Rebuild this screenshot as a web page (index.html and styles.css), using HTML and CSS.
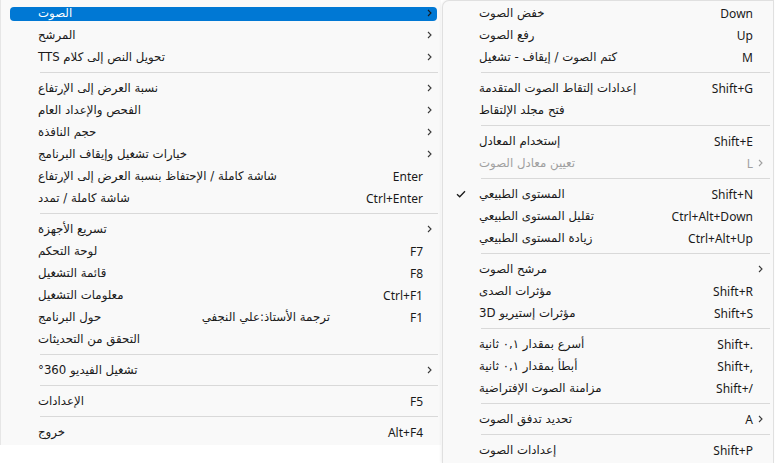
FILE: index.html
```html
<!DOCTYPE html>
<html>
<head>
<meta charset="utf-8">
<link rel="stylesheet" href="styles.css">
</head>
<body>
<div class="screen">

<!--main menu-->
<div class="menu main">
	<div class="item active"><span class="label" dir="rtl">الصوت</span><span class="key"></span><span class="arrow"><svg width="5" height="8" viewBox="0 0 5 8"><path d="M1 1 L4 4 L1 7"/></svg></span></div>
	<div class="item"><span class="label" dir="rtl">المرشح</span><span class="key"></span><span class="arrow"><svg width="5" height="8" viewBox="0 0 5 8"><path d="M1 1 L4 4 L1 7"/></svg></span></div>
	<div class="item"><span class="label" dir="rtl">تحويل النص إلى كلام TTS</span><span class="key"></span><span class="arrow"><svg width="5" height="8" viewBox="0 0 5 8"><path d="M1 1 L4 4 L1 7"/></svg></span></div>
	<div class="sep"></div>
	<div class="item"><span class="label" dir="rtl">نسبة العرض إلى الإرتفاع</span><span class="key"></span><span class="arrow"><svg width="5" height="8" viewBox="0 0 5 8"><path d="M1 1 L4 4 L1 7"/></svg></span></div>
	<div class="item"><span class="label" dir="rtl">الفحص والإعداد العام</span><span class="key"></span><span class="arrow"><svg width="5" height="8" viewBox="0 0 5 8"><path d="M1 1 L4 4 L1 7"/></svg></span></div>
	<div class="item"><span class="label" dir="rtl">حجم النافذة</span><span class="key"></span><span class="arrow"><svg width="5" height="8" viewBox="0 0 5 8"><path d="M1 1 L4 4 L1 7"/></svg></span></div>
	<div class="item"><span class="label" dir="rtl">خيارات تشغيل وإيقاف البرنامج</span><span class="key"></span><span class="arrow"><svg width="5" height="8" viewBox="0 0 5 8"><path d="M1 1 L4 4 L1 7"/></svg></span></div>
	<div class="item"><span class="label" dir="rtl">شاشة كاملة / الإحتفاظ بنسبة العرض إلى الإرتفاع</span><span class="key">Enter</span><span class="arrow"></span></div>
	<div class="item"><span class="label" dir="rtl">شاشة كاملة / تمدد</span><span class="key">Ctrl+Enter</span><span class="arrow"></span></div>
	<div class="sep"></div>
	<div class="item"><span class="label" dir="rtl">تسريع الأجهزة</span><span class="key"></span><span class="arrow"><svg width="5" height="8" viewBox="0 0 5 8"><path d="M1 1 L4 4 L1 7"/></svg></span></div>
	<div class="item"><span class="label" dir="rtl">لوحة التحكم</span><span class="key">F7</span><span class="arrow"></span></div>
	<div class="item"><span class="label" dir="rtl">قائمة التشغيل</span><span class="key">F8</span><span class="arrow"></span></div>
	<div class="item"><span class="label" dir="rtl">معلومات التشغيل</span><span class="key">Ctrl+F1</span><span class="arrow"></span></div>
	<div class="item"><span class="label" dir="rtl">حول البرنامج</span><span class="credit" dir="rtl">ترجمة الأستاذ:علي النجفي</span><span class="key fixed">F1</span><span class="arrow"></span></div>
	<div class="item"><span class="label" dir="rtl">التحقق من التحديثات</span><span class="key"></span><span class="arrow"></span></div>
	<div class="sep"></div>
	<div class="item"><span class="label" dir="rtl">تشغيل الفيديو 360°</span><span class="key"></span><span class="arrow"><svg width="5" height="8" viewBox="0 0 5 8"><path d="M1 1 L4 4 L1 7"/></svg></span></div>
	<div class="sep"></div>
	<div class="item"><span class="label" dir="rtl">الإعدادات</span><span class="key">F5</span><span class="arrow"></span></div>
	<div class="sep"></div>
	<div class="item"><span class="label" dir="rtl">خروج</span><span class="key">Alt+F4</span><span class="arrow"></span></div>
</div>

<!--sound submenu-->
<div class="menu sub">
	<div class="item"><span class="label" dir="rtl">خفض الصوت</span><span class="key">Down</span><span class="arrow"></span></div>
	<div class="item"><span class="label" dir="rtl">رفع الصوت</span><span class="key">Up</span><span class="arrow"></span></div>
	<div class="item"><span class="label" dir="rtl">كتم الصوت / إيقاف - تشغيل</span><span class="key">M</span><span class="arrow"></span></div>
	<div class="sep"></div>
	<div class="item"><span class="label" dir="rtl">إعدادات إلتقاط الصوت المتقدمة</span><span class="key">Shift+G</span><span class="arrow"></span></div>
	<div class="item"><span class="label" dir="rtl">فتح مجلد الإلتقاط</span><span class="key"></span><span class="arrow"></span></div>
	<div class="sep"></div>
	<div class="item"><span class="label" dir="rtl">إستخدام المعادل</span><span class="key">Shift+E</span><span class="arrow"></span></div>
	<div class="item disabled"><span class="label" dir="rtl">تعيين معادل الصوت</span><span class="key">L</span><span class="arrow"><svg width="5" height="8" viewBox="0 0 5 8"><path d="M1 1 L4 4 L1 7"/></svg></span></div>
	<div class="sep"></div>
	<div class="item"><span class="check"><svg width="10" height="8" viewBox="0 0 10 8"><path d="M1 4.2 L3.7 6.8 L9 1.2"/></svg></span><span class="label" dir="rtl">المستوى الطبيعي</span><span class="key">Shift+N</span><span class="arrow"></span></div>
	<div class="item"><span class="label" dir="rtl">تقليل المستوى الطبيعي</span><span class="key">Ctrl+Alt+Down</span><span class="arrow"></span></div>
	<div class="item"><span class="label" dir="rtl">زيادة المستوى الطبيعي</span><span class="key">Ctrl+Alt+Up</span><span class="arrow"></span></div>
	<div class="sep"></div>
	<div class="item"><span class="label" dir="rtl">مرشح الصوت</span><span class="key"></span><span class="arrow"><svg width="5" height="8" viewBox="0 0 5 8"><path d="M1 1 L4 4 L1 7"/></svg></span></div>
	<div class="item"><span class="label" dir="rtl">مؤثرات الصدى</span><span class="key">Shift+R</span><span class="arrow"></span></div>
	<div class="item"><span class="label" dir="rtl">مؤثرات إستيريو 3D</span><span class="key">Shift+S</span><span class="arrow"></span></div>
	<div class="sep"></div>
	<div class="item"><span class="label" dir="rtl">أسرع بمقدار ٠,١ ثانية</span><span class="key">Shift+.</span><span class="arrow"></span></div>
	<div class="item"><span class="label" dir="rtl">أبطأ بمقدار ٠,١ ثانية</span><span class="key">Shift+,</span><span class="arrow"></span></div>
	<div class="item"><span class="label" dir="rtl">مزامنة الصوت الإفتراضية</span><span class="key">Shift+/</span><span class="arrow"></span></div>
	<div class="sep"></div>
	<div class="item"><span class="label" dir="rtl">تحديد تدفق الصوت</span><span class="key">A</span><span class="arrow"><svg width="5" height="8" viewBox="0 0 5 8"><path d="M1 1 L4 4 L1 7"/></svg></span></div>
	<div class="sep"></div>
	<div class="item"><span class="label" dir="rtl">إعدادات الصوت</span><span class="key">Shift+P</span><span class="arrow"></span></div>
</div>

</div>
</body>
</html>
```

FILE: styles.css
```css
	body {
		margin: 0;
		background-color: #ffffff;
		overflow: hidden;
		font-family: "Noto Sans", "DejaVu Sans", sans-serif;
		font-size: 12px;
		color: #1a1a1a;
	}
	.screen {
		display: flex;
		align-items: flex-start;
	}

	.menu {
		background-color: #f9f9f9;
		padding: 2px 0;
		box-sizing: border-box;
	}
	.main {
		width: 441px;
		border-left: 1px solid #e6e6e6;
	}
	.sub {
		width: 332px;
		margin-left: 1px;
		padding-top: 1px;
		border: 1px solid #e0e0e0;
		border-bottom: none;
		border-top-left-radius: 7px;
		box-shadow: -1px 0 3px rgba(0, 0, 0, 0.06);
		flex-shrink: 0;
	}

	.item {
		position: relative;
		display: flex;
		align-items: center;
		height: 22px;
		padding-left: 37px;
		white-space: nowrap;
	}
	.sub .item {
		padding-left: 36px;
	}
	.label {
		font-family: "DejaVu Sans", sans-serif;
		font-size: 11.75px;
		unicode-bidi: isolate;
	}
	.credit {
		margin-left: auto;
		font-family: "DejaVu Sans", sans-serif;
		font-size: 11.75px;
		unicode-bidi: isolate;
	}
	.key {
		margin-left: auto;
	}
	.key.fixed {
		margin-left: 80px;
	}
	.arrow {
		width: 18px;
		display: flex;
		align-items: center;
		padding-left: 4px;
		box-sizing: border-box;
	}
	.sub .arrow {
		width: 20px;
		padding-left: 5px;
	}
	.arrow svg path {
		fill: none;
		stroke: #3a3a3a;
		stroke-width: 1.1;
	}

	.check {
		position: absolute;
		left: 13px;
		top: 7px;
		display: flex;
	}
	.check svg path {
		fill: none;
		stroke: #1a1a1a;
		stroke-width: 1.3;
	}

	.active {
		color: #ffffff;
	}
	.active::before {
		content: "";
		position: absolute;
		left: 9px;
		right: 4px;
		top: 5px;
		bottom: 3px;
		background-color: #0078d4;
		border-radius: 4px;
		z-index: 0;
	}
	.active span {
		position: relative;
	}
	.active .arrow svg path {
		stroke: #1a1a1a;
	}

	.disabled {
		color: #a0a0a0;
	}
	.disabled .arrow svg path {
		stroke: #a0a0a0;
	}

	.sep {
		height: 1px;
		margin: 4px 3px 4px 39px;
		background-color: #d9d9d9;
	}
	.sub .sep {
		margin-left: 38px;
	}
```
